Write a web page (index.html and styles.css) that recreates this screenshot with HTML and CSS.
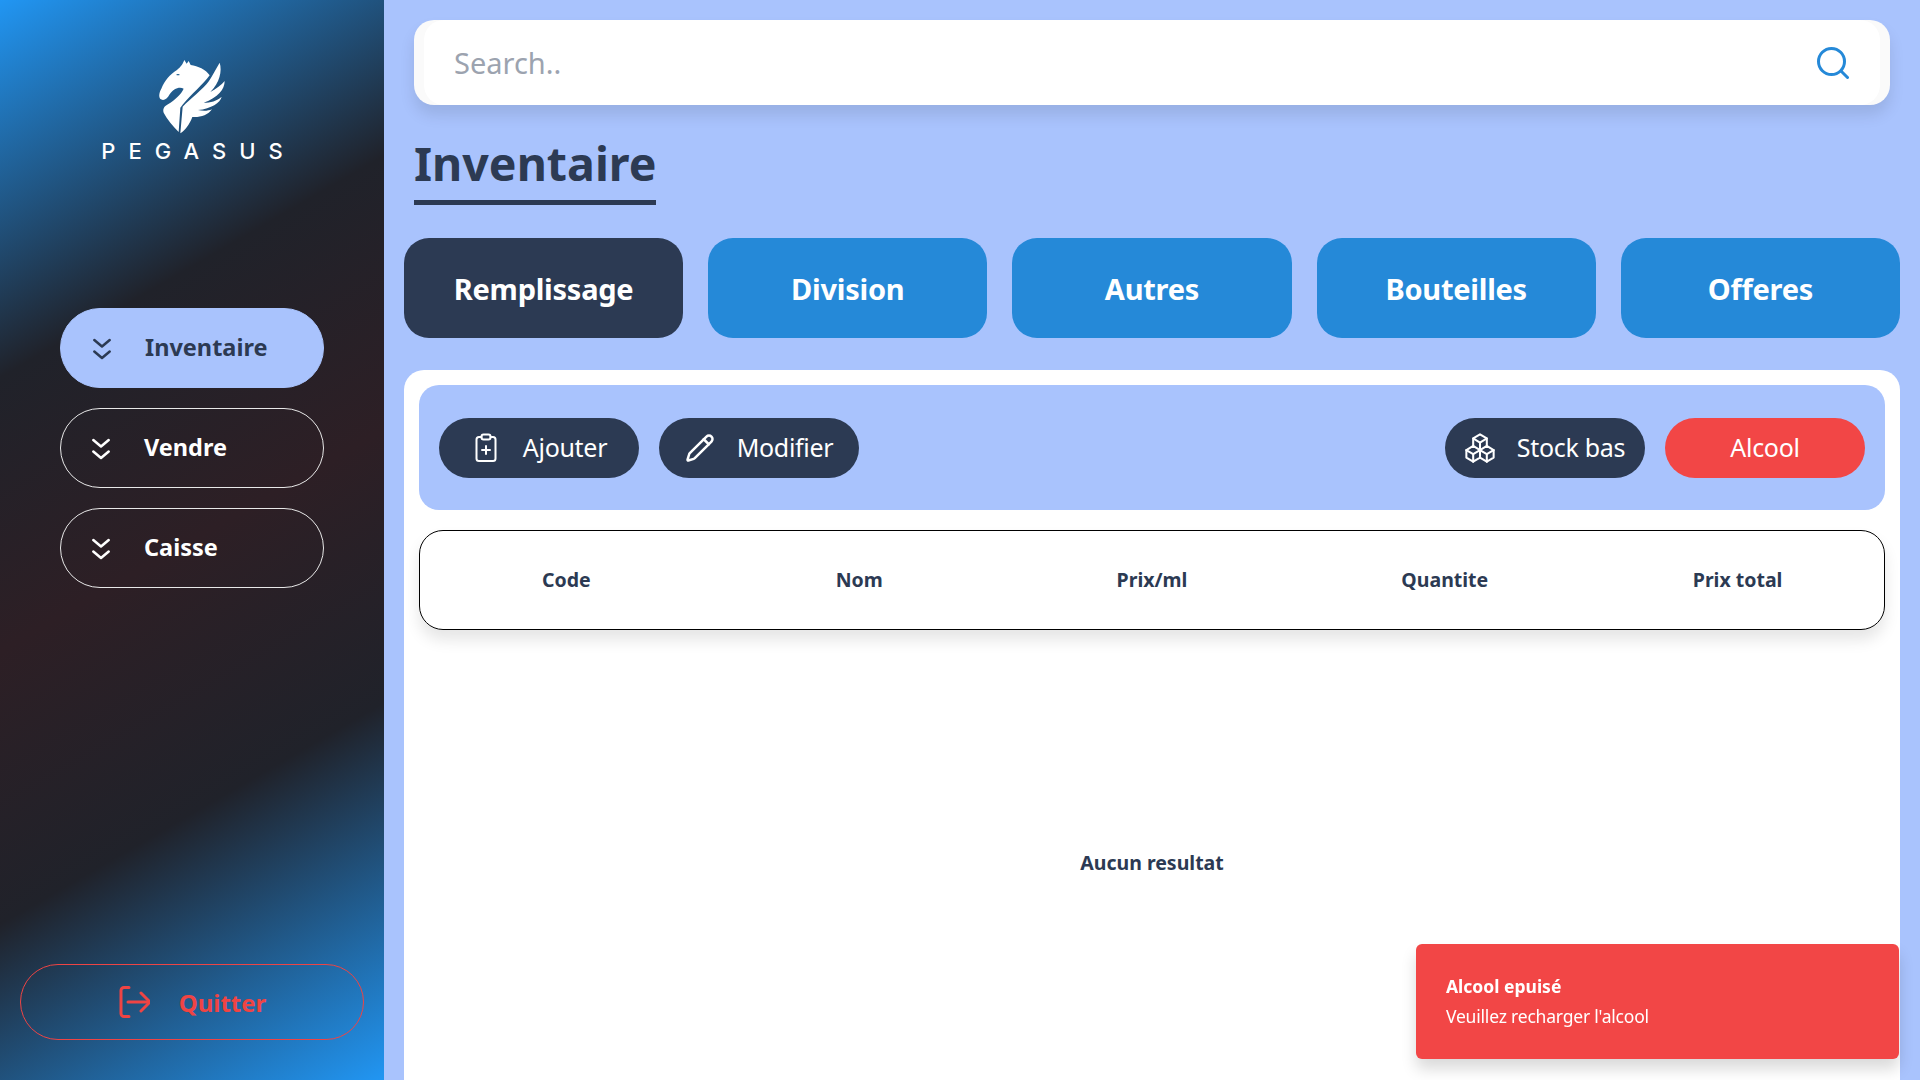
FILE: index.html
```html
<!DOCTYPE html>
<html>
<head>
<title>Pegasus</title>
<link rel="stylesheet" href="styles.css">
</head>

<body>

<div class="sidebar">
<div class="logo">
<svg class="logoMark" viewBox="200 20 220 240">
<path fill="#fff" d="M284 32 L291 43 L297 35 L303 47 C325 50 348 60 360 78 C340 105 305 135 280 165 L272 175 L267 248 C250 230 232 210 222 190 C218 178 225 170 235 165 C255 152 275 135 282 118 C270 110 250 118 240 135 C232 150 222 155 214 150 C206 145 208 130 215 118 C225 95 240 75 262 62 C270 55 278 48 284 32 Z"/>
<path fill="#fff" d="M272 252 L279 172 C300 150 340 120 358 95 C368 80 378 60 390 40 C398 65 390 100 362 128 C380 118 395 108 405 95 C405 120 385 145 342 160 C362 160 382 155 396 142 C392 160 365 178 325 182 C340 186 355 185 367 180 C355 198 330 205 308 203 C300 225 285 245 272 252 Z"/>
<ellipse cx="265" cy="76" rx="5" ry="2" fill="#1f5f93"/>
</svg>
<div class="logoText">PEGASUS</div>
</div>

<div class="nav">
<div class="navItem active">
<svg class="navIcon" viewBox="0 0 24 24"><path d="M4.300 4l7.700 6.500l7.700 -6.500"/><path d="M4.300 15.500l7.700 6.500l7.700 -6.500"/></svg>
<span>Inventaire</span>
</div>
<div class="navItem">
<svg class="navIcon" viewBox="0 0 24 24"><path d="M4.300 4l7.700 6.500l7.700 -6.500"/><path d="M4.300 15.500l7.700 6.500l7.700 -6.500"/></svg>
<span>Vendre</span>
</div>
<div class="navItem">
<svg class="navIcon" viewBox="0 0 24 24"><path d="M4.300 4l7.700 6.500l7.700 -6.500"/><path d="M4.300 15.500l7.700 6.500l7.700 -6.500"/></svg>
<span>Caisse</span>
</div>
</div>

<div class="quit">
<svg class="quitIcon" viewBox="0 0 32 32"><path d="M11 1.500h-5a3 3 0 0 0 -3 3v23a3 3 0 0 0 3 3h5"/><path d="M10 16h22"/><path d="M23 7l9 9l-9 9"/></svg>
<span>Quitter</span>
</div>
</div>

<div class="main">

<div class="searchBox">
<div class="searchInner">
<span class="searchText">Search..</span>
<svg class="searchIcon" viewBox="0 0 32 32"><circle cx="14.500" cy="14.500" r="13"/><path d="M24 24l6.500 6.500"/></svg>
</div>
</div>

<h1 class="title">Inventaire</h1>

<div class="tabs">
<div class="tab selected">Remplissage</div>
<div class="tab">Division</div>
<div class="tab">Autres</div>
<div class="tab">Bouteilles</div>
<div class="tab">Offeres</div>
</div>

<div class="panel">
<div class="toolbar">
<div class="toolGroup">
<div class="toolBtn">
<svg class="btnIcon" viewBox="0 0 24 30"><path d="M7.500 4h-2.500a2.500 2.500 0 0 0 -2.500 2.500v19a2.500 2.500 0 0 0 2.500 2.500h14a2.500 2.500 0 0 0 2.500 -2.500v-19a2.500 2.500 0 0 0 -2.500 -2.500h-2.500"/><rect x="7.500" y="1.500" width="9" height="5" rx="2"/><path d="M8 17h8"/><path d="M12 13v8"/></svg>
<span>Ajouter</span>
</div>
<div class="toolBtn">
<svg class="btnIcon" viewBox="0 0 24 24"><path d="M21.174 6.812a1 1 0 0 0-3.986-3.987L3.842 16.174a2 2 0 0 0-.5.83l-1.321 4.352a.5.5 0 0 0 .623.622l4.353-1.32a2 2 0 0 0 .83-.497z"/><path d="m15 5 4 4"/></svg>
<span>Modifier</span>
</div>
</div>
<div class="toolGroup">
<div class="toolBtn">
<svg class="btnIcon cubes" viewBox="1 1 22 22"><path d="M7 16.500l-5 -3l5 -3l5 3v5.500l-5 3z"/><path d="M2 13.500v5.500l5 3"/><path d="M7 16.545l5 -3.030"/><path d="M17 16.500l-5 -3l5 -3l5 3v5.500l-5 3z"/><path d="M12 19l5 3"/><path d="M17 16.500l5 -3"/><path d="M12 13.500v-5.500l-5 -3l5 -3l5 3v5.500"/><path d="M7 5.030v5.455"/><path d="M12 8l5 -3"/></svg>
<span>Stock bas</span>
</div>
<div class="toolBtn alert">Alcool</div>
</div>
</div>

<div class="tableHead">
<div>Code</div>
<div>Nom</div>
<div>Prix/ml</div>
<div>Quantite</div>
<div>Prix total</div>
</div>

<div class="empty">Aucun resultat</div>
</div>

</div>

<div class="toast">
<div class="toastTitle">Alcool epuisé</div>
<div class="toastText">Veuillez recharger l'alcool</div>
</div>

</body>
</html>
```

FILE: styles.css
```css
* {
    box-sizing: border-box;
}
body {
    margin: 0;
    height: 1080px;
    overflow: hidden;
    display: flex;
    background-color: #a9c3fd;
    color: #2c3a53;
    font-family: "Noto Sans", sans-serif;
}
.sidebar {
    width: 384px;
    height: 1080px;
    display: flex;
    flex-direction: column;
    background-image: linear-gradient(150deg, #2196f3 0%, #20222a 29%, #2d1f25 50%, #20222a 71%, #2196f3 100%);
}
.logo {
    padding-top: 56px;
    height: 308px;
    text-align: center;
    color: #fff;
}
.logoMark {
    display: block;
    width: 74px;
    height: 80px;
    margin: 0 auto;
    transform: translateX(1px);
}
.logoText {
    margin-top: 3px;
    margin-right: -13px;
    font: 500 22px/24px "Inter", sans-serif;
    letter-spacing: 13px;
}
.nav {
    display: flex;
    flex-direction: column;
    gap: 20px;
    padding: 0 60px;
}
.navItem {
    height: 80px;
    border: 1px solid #e8e8e8;
    border-radius: 40px;
    display: flex;
    align-items: center;
    padding-left: 28px;
    gap: 31px;
    color: #fff;
    font-size: 23.5px;
    font-weight: 700;
}
.navItem span {
    padding-bottom: 3px;
}
.navItem.active {
    background-color: #a9c3fd;
    border-color: #a9c3fd;
    color: #2c3a53;
    padding-left: 29px;
}
.navIcon {
    width: 24px;
    height: 24px;
    fill: none;
    stroke: currentColor;
    stroke-width: 2.500;
    stroke-linecap: round;
    stroke-linejoin: round;
}
.quit {
    margin: auto 20px 40px 20px;
    height: 76px;
    border: 1px solid #ef4444;
    border-radius: 38px;
    display: flex;
    align-items: center;
    justify-content: center;
    gap: 29px;
    color: #ef4444;
    font-size: 24px;
    font-weight: 700;
}
.quitIcon {
    width: 32px;
    height: 32px;
    fill: none;
    stroke: currentColor;
    stroke-width: 3;
    stroke-linecap: round;
    stroke-linejoin: round;
}
.main {
    flex: 1;
    padding: 20px 20px 0 20px;
}
.searchBox {
    margin: 0 10px;
    height: 85px;
    padding: 0 10px;
    background-color: #fafafa;
    border-radius: 20px;
    box-shadow: 0 10px 15px rgba(0, 0, 0, 0.1);
}
.searchInner {
    height: 85px;
    background-color: #fff;
    border-radius: 20px;
    display: flex;
    align-items: center;
    justify-content: space-between;
    padding: 0 31px 0 30px;
}
.searchText {
    padding-bottom: 1px;
    color: #9ca3af;
    font-size: 29px;
}
.searchIcon {
    width: 32px;
    height: 32px;
    fill: none;
    stroke: #2589d8;
    stroke-width: 3;
    stroke-linecap: round;
}
.title {
    display: inline-block;
    margin: 26px 0 0 10px;
    height: 74px;
    border-bottom: 5px solid #2c3a53;
    font-size: 46.500px;
    line-height: 64px;
    font-weight: 700;
}
.tabs {
    margin-top: 33px;
    display: grid;
    grid-template-columns: repeat(5, 1fr);
    gap: 25px;
}
.tab {
    height: 100px;
    border-radius: 25px;
    background-color: #2589d8;
    color: #fff;
    font-size: 29px;
    font-weight: 700;
    letter-spacing: -0.25px;
    display: flex;
    align-items: center;
    justify-content: center;
}
.tab.selected {
    background-color: #2c3a53;
}
.panel {
    margin-top: 32px;
    height: 760px;
    padding: 15px;
    background-color: #fff;
    border-radius: 20px 20px 0 0;
}
.toolbar {
    height: 125px;
    padding: 0 20px;
    background-color: #a9c3fd;
    border-radius: 20px;
    display: flex;
    align-items: center;
    justify-content: space-between;
}
.toolGroup {
    display: flex;
    gap: 20px;
}
.toolBtn {
    width: 200px;
    height: 60px;
    padding-bottom: 2px;
    border-radius: 30px;
    background-color: #2c3a53;
    color: #fff;
    font-size: 25px;
    letter-spacing: -0.3px;
    display: flex;
    align-items: center;
    justify-content: center;
    gap: 22px;
}
.toolBtn.alert {
    background-color: #f24646;
}
.btnIcon {
    width: 30px;
    height: 30px;
    margin-top: 2px;
    fill: none;
    stroke: currentColor;
    stroke-width: 2;
    stroke-linecap: round;
    stroke-linejoin: round;
}
.btnIcon.cubes {
    stroke-width: 1.500;
}
.tableHead {
    margin-top: 20px;
    height: 100px;
    padding-bottom: 1px;
    border: 1px solid #000;
    border-radius: 24px;
    box-shadow: 0 10px 15px rgba(0, 0, 0, 0.1);
    display: grid;
    grid-template-columns: repeat(5, 1fr);
    align-items: center;
    text-align: center;
    font-size: 19.500px;
    font-weight: 700;
}
.empty {
    margin-top: 219px;
    text-align: center;
    font-size: 19.500px;
    font-weight: 700;
}
.toast {
    position: fixed;
    right: 21px;
    bottom: 21px;
    width: 483px;
    height: 115px;
    padding: 0 30px 2px 30px;
    background-color: #f24646;
    border-radius: 6px;
    box-shadow: 0 10px 15px rgba(0, 0, 0, 0.15);
    color: #fff;
    font-size: 17.500px;
    display: flex;
    flex-direction: column;
    justify-content: center;
    gap: 6px;
}
.toastTitle {
    font-weight: 700;
}
.toastText {
    letter-spacing: -0.2px;
}
```
